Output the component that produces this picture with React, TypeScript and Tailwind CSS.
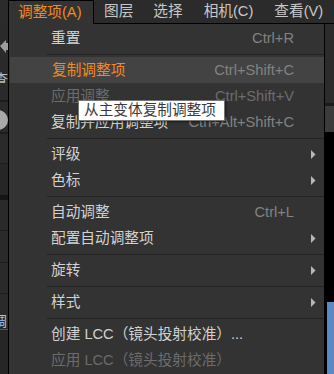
import React from "react";

type Item =
  | { kind: "sep" }
  | {
      kind: "row";
      label: string;
      shortcut?: string;
      arrow?: boolean;
      disabled?: boolean;
      active?: boolean;
    };

const items: Item[] = [
  { kind: "row", label: "重置", shortcut: "Ctrl+R" },
  { kind: "sep" },
  { kind: "row", label: "复制调整项", shortcut: "Ctrl+Shift+C", active: true },
  { kind: "row", label: "应用调整", shortcut: "Ctrl+Shift+V", disabled: true },
  { kind: "row", label: "复制并应用调整项", shortcut: "Ctrl+Alt+Shift+C" },
  { kind: "sep" },
  { kind: "row", label: "评级", arrow: true },
  { kind: "row", label: "色标", arrow: true },
  { kind: "sep" },
  { kind: "row", label: "自动调整", shortcut: "Ctrl+L" },
  { kind: "row", label: "配置自动调整项", arrow: true },
  { kind: "sep" },
  { kind: "row", label: "旋转", arrow: true },
  { kind: "sep" },
  { kind: "row", label: "样式", arrow: true },
  { kind: "sep" },
  { kind: "row", label: "创建 LCC（镜头投射校准）..." },
  { kind: "row", label: "应用 LCC（镜头投射校准）", disabled: true },
];

function Arrow() {
  return (
    <svg width="5" height="9" viewBox="0 0 5 9" className="shrink-0">
      <polygon points="0,0 4.5,4.5 0,9" fill="#b8b8b8" />
    </svg>
  );
}

export default function App() {
  return (
    <div className="relative w-[334px] h-[374px] overflow-hidden bg-[#2b2b2b] font-['Liberation_Sans','Noto_Sans_CJK_SC',sans-serif] text-[14.67px] leading-none select-none">
      {/* Menu bar */}
      <div className="flex h-[24px]">
        <div className="w-[8px] bg-[#2b2b2b]" />
        <div className="w-[86px] h-[24px] bg-[#333333] border-l border-t border-r border-black flex items-center pl-[9px] text-[#f38a1f]">
          调整项(A)
        </div>
        <div className="flex-1 flex items-center border-b border-black text-[#c8c8c8] h-[24px] pb-[1px]">
          <span className="ml-[10px]">图层</span>
          <span className="ml-[20px]">选择</span>
          <span className="ml-[21px]">相机(C)</span>
          <span className="ml-[21px]">查看(V)</span>
        </div>
      </div>

      {/* Body */}
      <div className="flex h-[350px]">
        {/* Left strip (app behind) */}
        <div className="w-[8px] flex flex-col bg-[#2a2a2a]">
          <div className="h-[14px]" />
          <div className="h-[17px] relative">
            <svg width="8" height="17" viewBox="0 0 8 17">
              <polygon points="0,8 6,2 6,5 8,5 8,12 6,12 6,15" fill="#9c9c9c" />
            </svg>
          </div>
          <div className="h-[17px]" />
          <div className="h-[12px] text-[#bdbdbd] overflow-hidden flex items-start">
            <span className="-ml-[6px] text-[14px]">查</span>
          </div>
          <div className="h-[18px] border-b-[2px] border-[#1d1d1d]" />
          <div className="h-[8px]" />
          <div className="h-[20px] relative overflow-hidden">
            <div className="absolute -left-[12px] top-0 w-[20px] h-[20px] rounded-full bg-[#a9a9a9]" />
          </div>
          <div className="h-[4px] border-b-[2px] border-[#1d1d1d]" />
          <div className="h-[30px] border-b border-[#1d1d1d]" />
          <div className="h-[31px] bg-[#262626]" />
          <div className="h-[5px] bg-[#151515]" />
          <div className="h-[31px] border-b border-[#1d1d1d]" />
          <div className="h-[32px] border-b border-[#1d1d1d]" />
          <div className="h-[31px] border-b border-[#1d1d1d]" />
          <div className="h-[20px]" />
          <div className="h-[15px] text-[#a9c4e6] overflow-hidden flex items-start">
            <span className="-ml-[7px] text-[14px]">调</span>
          </div>
          <div className="h-px bg-[#555]" />
          <div className="flex-1 bg-[#262626]" />
        </div>

        {/* Dropdown menu */}
        <div className="w-[317px] bg-[#333333] border-l border-r border-black pt-[1px] flex flex-col">
          {items.map((it, i) =>
            it.kind === "sep" ? (
              <div key={i} className="ml-[38px] mt-[3px] mb-[2px] h-px bg-[#232323]" />
            ) : (
              <div
                key={i}
                className={
                  "h-[26px] flex items-center pl-[42px] pr-[8px] " +
                  (it.active ? "bg-[#434343] ml-[1px] pl-[41px]" : "")
                }
              >
                <span
                  className={
                    "flex-1 whitespace-nowrap " +
                    (it.active
                      ? "text-[#f38a1f]"
                      : it.disabled
                      ? "text-[#6c6c6c]"
                      : "text-[#d2d2d2]")
                  }
                >
                  {it.label}
                </span>
                {it.shortcut && (
                  <span
                    className={
                      "mr-[22px] whitespace-nowrap " +
                      (it.disabled ? "text-[#6c6c6c]" : "text-[#828282]")
                    }
                  >
                    {it.shortcut}
                  </span>
                )}
                {it.arrow && <Arrow />}
              </div>
            )
          )}
        </div>

        {/* Right strip */}
        <div className="w-[9px] flex flex-col">
          <div className="h-[79px] bg-[#2c2c2c]" />
          <div className="h-[3px] bg-[#1a1a1a]" />
          <div className="h-[26px] bg-[#3b3b3b]" />
          <div className="h-[170px] bg-black" />
          <div className="flex-1 flex">
            <div className="w-[2px] bg-black" />
            <div className="flex-1 bg-[#5b88c6]" />
          </div>
        </div>
      </div>

      {/* Tooltip */}
      <div className="absolute left-[78px] top-[100px] w-[147px] h-[21px] bg-white border border-[#767676] shadow-[1px_1px_2px_rgba(0,0,0,0.5)] flex items-center pl-[5px] text-[#3a3a3a] whitespace-nowrap">
        从主变体复制调整项
      </div>
    </div>
  );
}
